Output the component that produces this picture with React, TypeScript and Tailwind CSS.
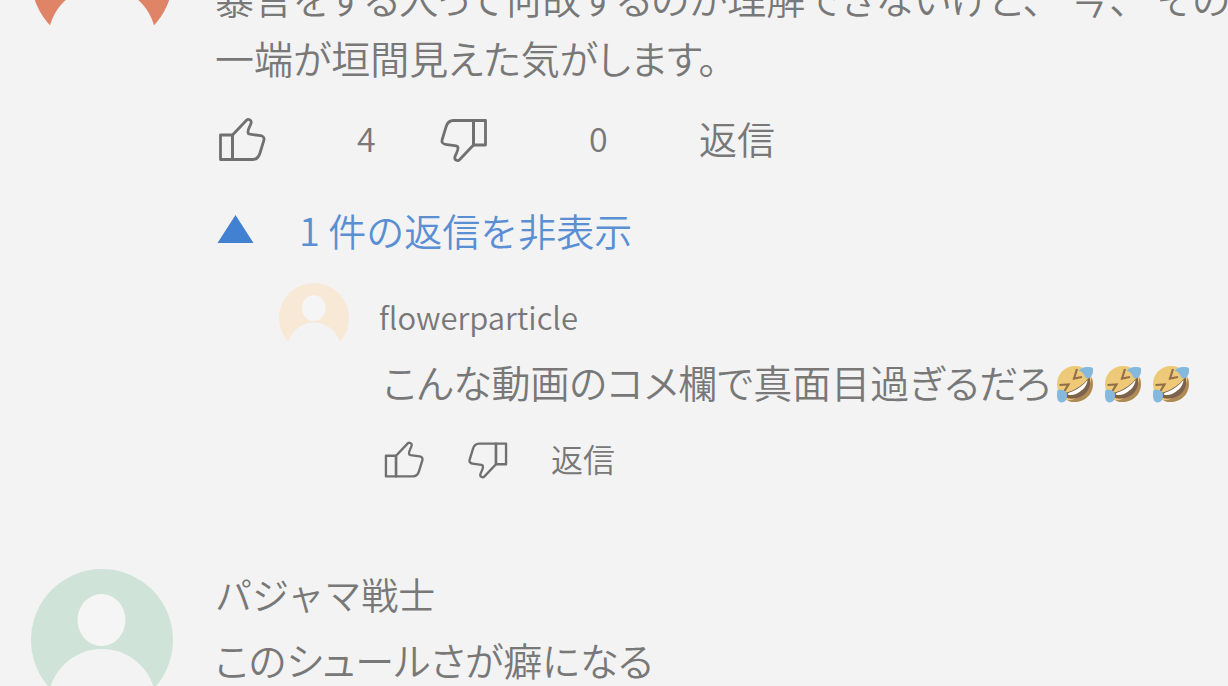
import type { ReactNode } from "react";
import clsx from "clsx";

export default function App() {
  return (
    <main className="min-h-screen overflow-hidden bg-[#f3f3f3] pl-[31px] font-['Noto_Sans_CJK_JP',sans-serif] font-[350] text-[#787878]">
      <article className="-mt-[94px] flex gap-[42px]">
        <Avatar className="size-[142px] text-[#e08468]" />
        <div className="min-w-0 flex-1 pt-[61px]">
          <CommentText>
            暴言をする人って何故するのが理解できないけど、{"\u2002 "}今、{"\u2002 "}その
            <br />
            一端が垣間見えた気がします。
          </CommentText>

          <div className="mt-7 flex h-[50px] items-center pl-[2px] text-[38px]">
            <IconButton label="高く評価" className="size-[50px]" />
            <span className="w-[172px] pb-1 pl-[90px] text-[34px] leading-none">4</span>
            <IconButton label="低く評価" className="size-[50px]" down />
            <span className="w-[210px] pb-1 pl-[100px] text-[34px] leading-none">0</span>
            <button className="pb-1 leading-none">返信</button>
          </div>

          <button className="mt-[34px] flex h-[60px] items-center gap-[44px] text-[38px] text-[#5a8fd4]">
            <svg viewBox="0 0 40 30" className="h-[30px] w-10" fill="#4280d2">
              <path d="M20.500 1 38.500 29H2.500Z" />
            </svg>
            1 件の返信を非表示
          </button>

          <article className="mt-6 flex gap-[30px] pl-16">
            <Avatar className="size-[70px] text-[#f7e9d6]" />
            <div className="min-w-0 flex-1">
              <h3 className="h-[68px] text-[31px] leading-[68px]">flowerparticle</h3>
              <div className="pl-1">
                <CommentText>
                  こんな動画のコメ欄で真面目過ぎるだろ
                  <Rofl />
                  <Rofl />
                  <Rofl />
                </CommentText>
                <div className="mt-7 flex h-[42px] items-center text-[32px]">
                  <IconButton label="高く評価" className="size-[42px]" />
                  <IconButton label="低く評価" className="ml-[42px] size-[42px]" down />
                  <button className="ml-[42px] pb-1 leading-none">返信</button>
                </div>
              </div>
            </div>
          </article>
        </div>
      </article>

      <article className="mt-[88px] -mb-16 flex gap-[42px]">
        <Avatar className="size-[142px] text-[#cfe3d9]" />
        <div className="min-w-0 flex-1">
          <h3 className="h-[60px] text-[37px] leading-[50px]">パジャマ戦士</h3>
          <CommentText>このシュールさが癖になる</CommentText>
        </div>
      </article>
    </main>
  );
}

function CommentText({ children }: { children: ReactNode }) {
  return (
    <p className="text-[39px] leading-[60px] whitespace-nowrap [font-feature-settings:'palt']">
      {children}
    </p>
  );
}

function Avatar({ className }: { className: string }) {
  return (
    <svg viewBox="0 0 142 142" className={clsx("shrink-0", className)} aria-hidden="true">
      <circle cx="71" cy="71" r="71" fill="currentColor" />
      <ellipse cx="70.500" cy="51" rx="24" ry="26" fill="#f4f5f4" />
      <circle cx="71" cy="134" r="54" fill="#f3f3f3" />
    </svg>
  );
}

type IconButtonProps = { label: string; className: string; down?: boolean };

function IconButton({ label, className, down }: IconButtonProps) {
  return (
    <button aria-label={label} className={clsx("shrink-0", className)}>
      <svg
        viewBox="0 0 50 50"
        className={clsx("size-full", down && "rotate-180")}
        fill="none"
        stroke="#707070"
        strokeWidth="2.800"
        strokeLinejoin="round"
      >
        <path d="M3.500 20h12v24.500h-12z" />
        <path d="M15.500 20 29.500 5.200c1.600-1.600 5-.4 4.700 2.200-.3 3.200-3.600 5.900-3.200 10.100.1 1 .8 1.500 1.800 1.700l10.800 1.500c2.600.4 4 2.200 3.300 4.500l-3.900 12.800c-1.200 4.200-3.300 6.500-7.500 6.500H15.500z" />
      </svg>
    </button>
  );
}

function Rofl() {
  return (
    <svg
      viewBox="0 0 40 40"
      className="mx-1 inline-block size-10 align-[-6px]"
      role="img"
      aria-label="🤣"
    >
      <circle cx="20" cy="20" r="18" fill="#edc978" />
      <path d="M36.500 13A18 18 0 0 1 12 36.200C22 37 36 26 36.500 13Z" fill="#ad8a55" />
      <path d="M34.500 13c3.500 13-7 23-20.500 21.500C9 33.500 8 30 11.500 28.500 21 26 28 21 34.500 13Z" fill="#7d614a" />
      <path d="M32.500 16c0 7-9 15.500-18 15-2.500-.3-2.500-1.500 0-2.500 8-2.500 12.500-6.500 18-12.500Z" fill="#fff" />
      <path d="m22 5-3 9.500 8-1.500M4.500 21l9-.5-4 6.500" fill="none" stroke="#937048" strokeWidth="2.200" />
      <path d="M24 7c2-4.500 10-4.500 14-3 .5 5-1 10-5.500 10.500C29 14.500 30 8 24 7Z" fill="#84b9dd" />
      <path d="M2.500 26c5-1 9 1 9.500 4.500.5 4-1.500 8-5.500 8S1 33 2.500 26Z" fill="#84b9dd" />
    </svg>
  );
}
